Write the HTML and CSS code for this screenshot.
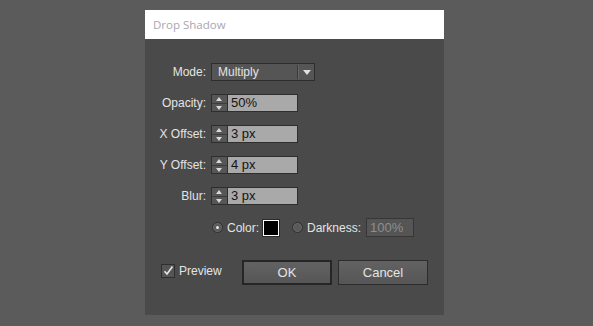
FILE: index.html
```html
<!DOCTYPE html>
<html lang="en">
<head>
    <meta charset="UTF-8">
    <title>Drop Shadow</title>
    <link rel="stylesheet" href="styles.css">
</head>
<body>

    <div class="dialog">
        <div class="titlebar">Drop Shadow</div>

        <div class="content">
            <!-- Mode -->
            <div class="row">
                <span class="label">Mode:</span>
                <div class="select">
                    <span class="select-value">Multiply</span>
                    <span class="select-arrow"></span>
                </div>
            </div>

            <!-- Campos numericos -->
            <div class="row">
                <span class="label">Opacity:</span>
                <div class="spin">
                    <span class="spin-btns"><i class="up"></i><i class="down"></i></span>
                    <span class="spin-value">50%</span>
                </div>
            </div>
            <div class="row">
                <span class="label">X Offset:</span>
                <div class="spin">
                    <span class="spin-btns"><i class="up"></i><i class="down"></i></span>
                    <span class="spin-value">3 px</span>
                </div>
            </div>
            <div class="row">
                <span class="label">Y Offset:</span>
                <div class="spin">
                    <span class="spin-btns"><i class="up"></i><i class="down"></i></span>
                    <span class="spin-value">4 px</span>
                </div>
            </div>
            <div class="row">
                <span class="label">Blur:</span>
                <div class="spin">
                    <span class="spin-btns"><i class="up"></i><i class="down"></i></span>
                    <span class="spin-value">3 px</span>
                </div>
            </div>

            <!-- Color / Darkness -->
            <div class="row color-row">
                <span class="radio checked"></span>
                <span class="opt-label">Color:</span>
                <span class="swatch"></span>
                <span class="radio second"></span>
                <span class="opt-label">Darkness:</span>
                <span class="darkness">100%</span>
            </div>

            <!-- Botoes -->
            <div class="actions">
                <div class="preview">
                    <span class="checkbox">
                        <svg width="12" height="12" viewBox="0 0 12 12">
                            <path d="M2.5 6.2 L5 9 L10.5 1.5" fill="none" stroke="#e8e8e8" stroke-width="1.6"/>
                        </svg>
                    </span>
                    <span class="opt-label">Preview</span>
                </div>
                <button class="btn btn-default">OK</button>
                <button class="btn">Cancel</button>
            </div>
        </div>
    </div>

</body>
</html>
```

FILE: styles.css
```css
body {
    margin: 0;
    background-color: #5b5b5b;
    font-family: "Liberation Sans", Arial, sans-serif;
    font-size: 12px;
    color: #e4e4e4;
}
.dialog {
    margin: 10px 0 0 145px;
    width: 299px;
    height: 305px;
    background-color: #4a4a4a;
}
.titlebar {
    height: 29px;
    line-height: 29px;
    padding-left: 8px;
    background-color: #fff;
    color: #a9a6b2;
    font-family: "Open Sans", sans-serif;
    font-size: 11.5px;
}
.content {
    padding-top: 24px;
}
.row {
    display: flex;
    align-items: center;
    height: 18px;
    margin-bottom: 13px;
}
.label {
    width: 61px;
    margin-right: 5px;
    text-align: right;
}

/* select */
.select {
    display: flex;
    align-items: center;
    width: 102px;
    height: 16px;
    border: 1px solid #2e2e2e;
    background-color: #555;
}
.select-value {
    flex: 1;
    padding-left: 6px;
}
.select-arrow {
    width: 16px;
    height: 14px;
    border-left: 1px solid #3a3a3a;
    box-shadow: inset 1px 0 0 #666;
    position: relative;
}
.select-arrow::after {
    content: "";
    position: absolute;
    left: 5px;
    top: 5px;
    border-left: 4px solid transparent;
    border-right: 4px solid transparent;
    border-top: 5px solid #e0e0e0;
}

/* spin */
.spin {
    display: flex;
    width: 87px;
    height: 18px;
}
.spin-btns {
    width: 15px;
    border: 1px solid #2e2e2e;
    background-color: #565656;
    display: flex;
    flex-direction: column;
}
.spin-btns i {
    flex: 1;
    position: relative;
}
.spin-btns .up {
    border-bottom: 1px solid #3c3c3c;
}
.spin-btns .up::after,
.spin-btns .down::after {
    content: "";
    position: absolute;
    left: 4px;
    border-left: 3px solid transparent;
    border-right: 3px solid transparent;
}
.spin-btns .up::after {
    top: 2px;
    border-bottom: 4px solid #d8d8d8;
}
.spin-btns .down::after {
    top: 2px;
    border-top: 4px solid #d8d8d8;
}
.spin-value {
    flex: 1;
    height: 16px;
    line-height: 16px;
    border: 1px solid #2e2e2e;
    border-left: none;
    background-color: #a9a9a9;
    color: #141414;
    padding-left: 3px;
    font-size: 13px;
}

/* cor */
.color-row {
    padding-left: 67px;
    height: 19px;
}
.radio {
    width: 9px;
    height: 9px;
    border-radius: 50%;
    border: 1px solid #2f2f2f;
    background-color: #5a5a5a;
    box-shadow: inset 0 0 0 1px #6a6a6a;
    position: relative;
    margin-right: 4px;
}
.radio.checked::after {
    content: "";
    position: absolute;
    left: 3px;
    top: 3px;
    width: 3px;
    height: 3px;
    border-radius: 50%;
    background-color: #e8e8e8;
}
.radio.second {
    margin-left: 13px;
}
.swatch {
    width: 14px;
    height: 14px;
    margin-left: 4px;
    border: 1px solid #fff;
    outline: 1px solid #2a2a2a;
    background-color: #000;
}
.darkness {
    width: 43px;
    height: 17px;
    line-height: 17px;
    margin-left: 5px;
    padding-left: 3px;
    border: 1px solid #363636;
    background-color: #555;
    color: #8e8e8e;
    font-size: 13px;
}

/* botoes */
.actions {
    display: flex;
    align-items: center;
    margin-top: 23px;
    padding-left: 16px;
}
.preview {
    display: flex;
    align-items: center;
    width: 81px;
    margin-top: -4px;
}
.checkbox {
    width: 12px;
    height: 12px;
    border: 1px solid #2e2e2e;
    background-color: #555;
    margin-right: 4px;
    display: flex;
}
.btn {
    width: 90px;
    height: 25px;
    margin-right: 6px;
    padding: 0;
    border: 1px solid #2c2c2c;
    background: linear-gradient(#626262, #565656);
    color: #e4e4e4;
    font-family: "Liberation Sans", Arial, sans-serif;
    font-size: 13px;
}
.btn-default {
    border: 2px solid #262626;
}
```
